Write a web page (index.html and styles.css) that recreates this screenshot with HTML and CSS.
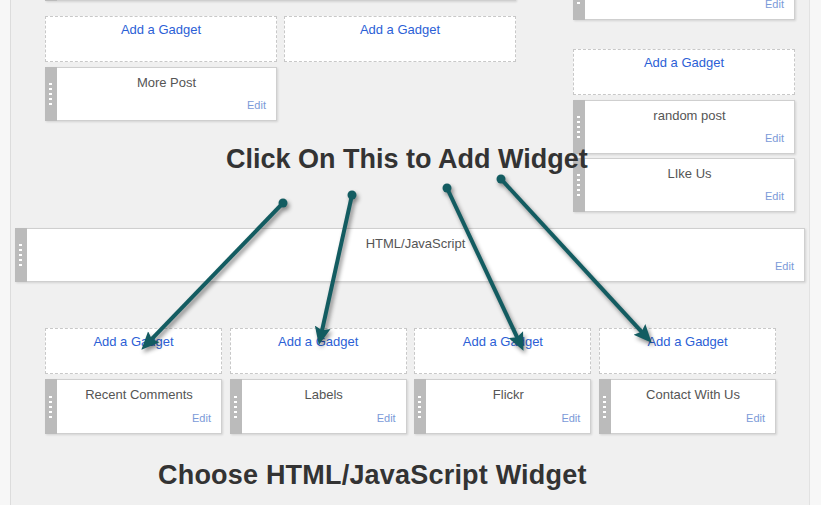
FILE: index.html
```html
<!DOCTYPE html>
<html>
<head>
<meta charset="utf-8">
<link rel="stylesheet" href="styles.css">
</head>
<body>
<div class="panel">
  <div class="top">
    <div class="col-left">
      <div class="widget w-topleft"><div class="handle"><i></i><i></i><i></i><i></i><i></i></div><div class="content"></div></div>
      <div class="dash-row">
        <div class="gadget">Add a Gadget</div>
        <div class="gadget">Add a Gadget</div>
      </div>
      <div class="widget w-half"><div class="handle"><i></i><i></i><i></i><i></i><i></i></div><div class="content"><div class="title">More Post</div><div class="edit">Edit</div></div></div>
    </div>
    <div class="col-right">
      <div class="widget w-topright"><div class="handle"><i></i><i></i><i></i><i></i><i></i></div><div class="content"><div class="title"></div><div class="edit">Edit</div></div></div>
      <div class="gadget g-right">Add a Gadget</div>
      <div class="widget w-r1"><div class="handle"><i></i><i></i><i></i><i></i><i></i></div><div class="content"><div class="title">random post</div><div class="edit">Edit</div></div></div>
      <div class="widget w-r2"><div class="handle"><i></i><i></i><i></i><i></i><i></i></div><div class="content"><div class="title">LIke Us</div><div class="edit">Edit</div></div></div>
    </div>
  </div>

  <div class="widget w-wide"><div class="handle"><i></i><i></i><i></i><i></i><i></i></div><div class="content"><div class="title">HTML/JavaScript</div><div class="edit">Edit</div></div></div>

  <div class="bottom">
    <div class="bcol">
      <div class="gadget">Add a Gadget</div>
      <div class="widget"><div class="handle"><i></i><i></i><i></i><i></i><i></i></div><div class="content"><div class="title">Recent Comments</div><div class="edit">Edit</div></div></div>
    </div>
    <div class="bcol">
      <div class="gadget">Add a Gadget</div>
      <div class="widget"><div class="handle"><i></i><i></i><i></i><i></i><i></i></div><div class="content"><div class="title">Labels</div><div class="edit">Edit</div></div></div>
    </div>
    <div class="bcol">
      <div class="gadget">Add a Gadget</div>
      <div class="widget"><div class="handle"><i></i><i></i><i></i><i></i><i></i></div><div class="content"><div class="title">Flickr</div><div class="edit">Edit</div></div></div>
    </div>
    <div class="bcol">
      <div class="gadget">Add a Gadget</div>
      <div class="widget"><div class="handle"><i></i><i></i><i></i><i></i><i></i></div><div class="content"><div class="title">Contact With Us</div><div class="edit">Edit</div></div></div>
    </div>
  </div>

  <div class="caption">Choose HTML/JavaScript Widget</div>

  <div class="callout">Click On This to Add Widget</div>
</div>

<svg class="arrows" width="821" height="505" viewBox="0 0 821 505">
  <defs>
    <marker id="ah" markerWidth="20" markerHeight="18" refX="7" refY="9" orient="auto" markerUnits="userSpaceOnUse">
      <path d="M0,1 L18,9 L0,17 L3,9 z" fill="#135c61"/>
    </marker>
  </defs>
  <g class="arrow-group">
    <line x1="283" y1="203" x2="149" y2="341.8" marker-end="url(#ah)"/>
    <circle cx="283" cy="203" r="4.5"/>
    <line x1="352" y1="195" x2="321.2" y2="334.2" marker-end="url(#ah)"/>
    <circle cx="352" cy="195" r="4.5"/>
    <line x1="447" y1="188" x2="518.8" y2="340.9" marker-end="url(#ah)"/>
    <circle cx="447" cy="188" r="4.5"/>
    <line x1="501" y1="179" x2="644.2" y2="334.6" marker-end="url(#ah)"/>
    <circle cx="501" cy="179" r="4.5"/>
  </g>
</svg>
</body>
</html>
```

FILE: styles.css
```css
html, body {
  margin: 0;
  padding: 0;
}
body {
  background: #f7f7f7;
  font-family: "Liberation Sans", Arial, sans-serif;
  width: 821px;
  height: 505px;
  overflow: hidden;
  position: relative;
}
.panel {
  position: relative;
  margin-left: 10px;
  width: 798px;
  height: 505px;
  background: #f0f0f0;
  border-left: 1px solid #dcdcdc;
  border-right: 1px solid #e2e2e2;
  overflow: hidden;
}
.top {
  display: flex;
  align-items: flex-start;
  margin-left: 34px;
}
.col-left {
  width: 471px;
  display: flex;
  flex-direction: column;
}
.col-right {
  width: 222px;
  margin-left: 57px;
  display: flex;
  flex-direction: column;
}
.dash-row {
  display: flex;
  gap: 7px;
  margin-top: 15px;
}
.dash-row .gadget {
  width: 232px;
}
.gadget {
  box-sizing: border-box;
  height: 46px;
  background: #fff;
  border: 1px dashed #c8c8c8;
  text-align: center;
  color: #2c5fd6;
  font-size: 13px;
  line-height: 16px;
  padding-top: 5px;
}
.widget {
  box-sizing: border-box;
  display: flex;
  height: 54px;
  background: #fff;
  border: 1px solid #cfcfcf;
  border-left: none;
  box-shadow: 1px 1px 2px rgba(0, 0, 0, 0.12);
}
.handle {
  width: 12px;
  flex: none;
  background: #bbbbbb;
  margin: -1px 0;
  display: flex;
  flex-direction: column;
  justify-content: center;
  gap: 3px;
  padding-left: 4px;
  box-sizing: border-box;
}
.handle i {
  display: block;
  width: 3px;
  height: 2px;
  background: #fff;
}
.content {
  flex: 1;
  display: flex;
  flex-direction: column;
  justify-content: space-between;
  padding: 7px 10px 8px 10px;
  min-width: 0;
}
.title {
  text-align: center;
  font-size: 13px;
  line-height: 16px;
  height: 16px;
  color: #555;
}
.edit {
  text-align: right;
  font-size: 11px;
  line-height: 13px;
  color: #7b9ad8;
}
.w-topleft {
  margin-top: -53px;
}
.w-half {
  width: 232px;
  margin-top: 5px;
}
.w-topright {
  margin-top: -34px;
}
.g-right {
  margin-top: 29px;
}
.w-r1 {
  margin-top: 5px;
}
.w-r2 {
  margin-top: 4px;
}
.w-wide {
  width: 790px;
  margin-left: 4px;
  margin-top: 16px;
}
.bottom {
  display: grid;
  grid-template-columns: repeat(4, 177px);
  column-gap: 7.7px;
  margin-left: 34px;
  margin-top: 46px;
}
.bcol {
  display: flex;
  flex-direction: column;
}
.bcol .widget {
  margin-top: 5px;
  height: 55px;
}
.caption {
  margin-top: 28px;
  margin-left: 147px;
  font-size: 27px;
  line-height: 27px;
  font-weight: bold;
  color: #333;
  letter-spacing: 0.2px;
}
.callout {
  position: absolute;
  left: 215px;
  top: 146px;
  font-size: 27px;
  line-height: 27px;
  font-weight: bold;
  color: #333;
  white-space: nowrap;
}
.arrows {
  position: absolute;
  left: 0;
  top: 0;
  pointer-events: none;
}
.arrow-group {
  filter: drop-shadow(2px 3px 2px rgba(0, 0, 0, 0.45));
}
.arrow-group line {
  stroke: #135c61;
  stroke-width: 4;
}
.arrow-group circle {
  fill: #135c61;
}
```
